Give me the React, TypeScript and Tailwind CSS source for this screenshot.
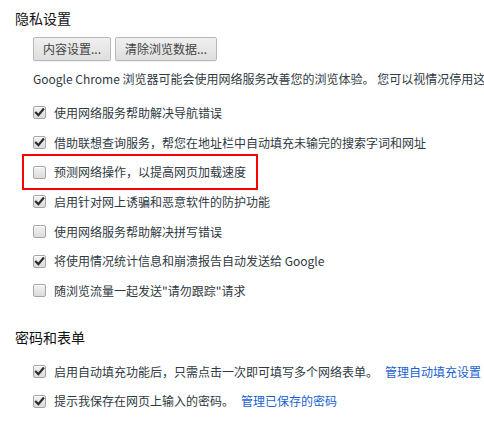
import React from 'react'

const font = '"Noto Sans CJK SC", "Noto Sans", sans-serif'

function Box({ checked }: { checked: boolean }) {
  return (
    <span className="relative w-[13px] h-[13px] shrink-0 rounded-[2px] border border-[#a6a6a6] bg-gradient-to-b from-[#f2f2f2] to-[#dcdcdc] shadow-[inset_0_1px_0_#fff]">
      {checked && (
        <svg viewBox="0 0 13 13" className="absolute -left-px -top-px w-[13px] h-[13px]">
          <path d="M3 6.8 L5.4 9.2 L10.2 3.4" fill="none" stroke="#2b2b2b" strokeWidth="2.2" strokeLinecap="square" />
        </svg>
      )}
    </span>
  )
}

function Row({
  checked,
  label,
  link,
  highlight,
}: {
  checked: boolean
  label: string
  link?: string
  highlight?: boolean
}) {
  return (
    <div className="h-[29.7px] flex items-center">
      <div className="relative flex items-center gap-[8px]">
        {highlight && (
          <div className="absolute -left-[11px] -right-[12px] -top-[10px] -bottom-[10px] border-2 border-[#f00]" />
        )}
        <Box checked={checked} />
        <span className="whitespace-nowrap">
          {label}
          {link && <span className="ml-[7px] text-[#1a5fd0]">{link}</span>}
        </span>
      </div>
    </div>
  )
}

function Btn({ children }: { children: React.ReactNode }) {
  return (
    <button className="h-[24px] px-[9px] rounded-[2px] border border-[#b8b8b8] bg-gradient-to-b from-[#f0f0f0] to-[#dedede] text-[12px] leading-[16px] text-[#444] shadow-[0_1px_0_rgba(0,0,0,0.06)]">
      {children}
    </button>
  )
}

export default function App() {
  return (
    <div
      className="w-[484px] h-[423px] overflow-hidden bg-white text-[12px] leading-[16px] text-[#303942]"
      style={{ fontFamily: font }}
    >
      {/* Privacy */}
      <div className="pt-[10px] pl-[15px] text-[14px] leading-[16px] text-[#111]">隐私设置</div>
      <div className="pl-[33px]">
        <div className="mt-[11px] flex gap-[4px]">
          <Btn>内容设置...</Btn>
          <Btn>清除浏览数据...</Btn>
        </div>
        <div className="mt-[10px] whitespace-nowrap">
          Google Chrome 浏览器可能会使用网络服务改善您的浏览体验。 您可以视情况停用这些服务。
        </div>
        <div className="mt-[11px]">
          <Row checked label="使用网络服务帮助解决导航错误" />
          <Row checked label="借助联想查询服务，帮您在地址栏中自动填充未输完的搜索字词和网址" />
          <Row checked={false} highlight label="预测网络操作，以提高网页加载速度" />
          <Row checked label="启用针对网上诱骗和恶意软件的防护功能" />
          <Row checked={false} label="使用网络服务帮助解决拼写错误" />
          <Row checked label="将使用情况统计信息和崩溃报告自动发送给 Google" />
          <Row checked={false} label={'随浏览流量一起发送"请勿跟踪"请求'} />
        </div>
      </div>

      {/* Passwords and forms */}
      <div className="mt-[23px] pl-[15px] text-[14px] leading-[16px] text-[#111]">密码和表单</div>
      <div className="pl-[33px] mt-[12px]">
        <Row
          checked
          label="启用自动填充功能后，只需点击一次即可填写多个网络表单。"
          link="管理自动填充设置"
        />
        <Row checked label="提示我保存在网页上输入的密码。" link="管理已保存的密码" />
      </div>
    </div>
  )
}
